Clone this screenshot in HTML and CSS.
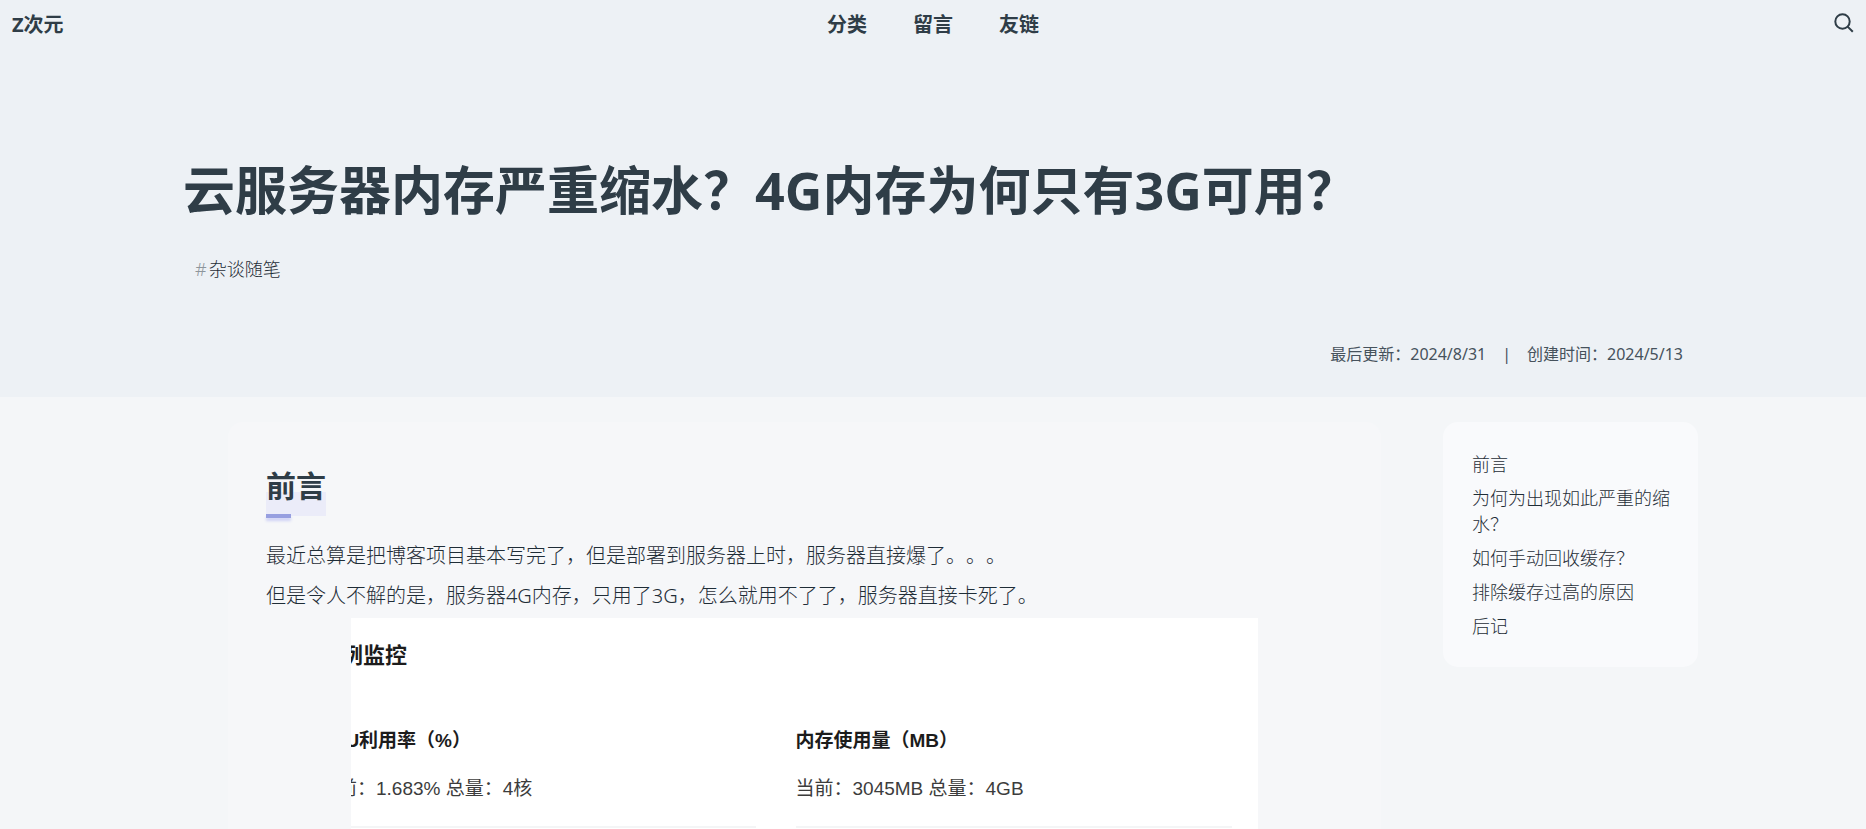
FILE: index.html
```html
<!DOCTYPE html>
<html lang="zh-CN">
<head>
  <meta charset="UTF-8">
  <meta name="viewport" content="width=device-width, initial-scale=1.0">
  <title>云服务器内存严重缩水？4G内存为何只有3G可用？</title>
  <link rel="stylesheet" href="styles.css">
</head>
<body>
  <header class="hero">
    <nav class="navbar">
      <a class="logo" href="#">Z次元</a>
      <div class="nav-links">
        <a href="#">分类</a>
        <a href="#">留言</a>
        <a href="#">友链</a>
      </div>
      <button class="search-btn" type="button" aria-label="搜索">
        <svg viewBox="0 0 20 20" width="20" height="20" fill="none" stroke="currentColor" stroke-width="2">
          <circle cx="8.5" cy="8.5" r="7.2"/>
          <path d="M13.6 13.6L18.8 18.8"/>
        </svg>
      </button>
    </nav>

    <div class="hero-inner">
      <h1>云服务器内存严重缩水？4G内存为何只有3G可用？</h1>
      <div class="tags">
        <a href="#"><span class="hash">#</span>杂谈随笔</a>
      </div>
      <div class="meta">
        <span>最后更新：2024/8/31</span>
        <span>|</span>
        <span>创建时间：2024/5/13</span>
      </div>
    </div>
  </header>

  <main class="content">
    <article class="post">
      <h2 id="preface">前言</h2>
      <p>最近总算是把博客项目基本写完了，但是部署到服务器上时，服务器直接爆了。。。</p>
      <p>但是令人不解的是，服务器4G内存，只用了3G，怎么就用不了了，服务器直接卡死了。</p>

      <!-- Server monitor panel, cut off at its left edge -->
      <figure class="monitor">
        <div class="monitor-inner">
          <h3>实例监控</h3>
          <div class="charts">
            <section>
              <h4>CPU利用率（%）</h4>
              <div class="usage">当前：1.683% 总量：4核</div>
            </section>
            <section>
              <h4>内存使用量（MB）</h4>
              <div class="usage">当前：3045MB 总量：4GB</div>
            </section>
          </div>
        </div>
      </figure>
    </article>

    <aside class="toc">
      <a href="#preface">前言</a>
      <a href="#">为何为出现如此严重的缩水？</a>
      <a href="#">如何手动回收缓存？</a>
      <a href="#">排除缓存过高的原因</a>
      <a href="#">后记</a>
    </aside>
  </main>
</body>
</html>
```
FILE: styles.css
```css
* {
  box-sizing: border-box;
}

body {
  margin: 0;
  background-color: #f4f6f8;
  color: #1f2d37;
  font-family: "Noto Sans", "Noto Sans CJK SC", sans-serif;
  font-size: 20px;
  font-weight: 300;
  text-spacing-trim: space-all;
  overflow-x: hidden;
}

a {
  color: inherit;
  text-decoration: none;
}

h1, h2, h3, h4, p, figure {
  margin: 0;
}

.hero {
  background-color: #edf1f5;
}

.navbar {
  display: grid;
  grid-template-columns: 1fr auto 1fr;
  align-items: center;
  height: 46px;
  padding: 0 12px;
  color: #2f3d47;
  font-weight: 700;
}

.nav-links {
  display: flex;
  gap: 46px;
}

.search-btn {
  justify-self: end;
  display: flex;
  padding: 0;
  border: none;
  background: none;
  color: inherit;
  cursor: pointer;
}

.hero-inner {
  max-width: 1500px;
  margin: 0 auto;
  padding: 105px 0 29px;
}

h1 {
  color: #2f3d47;
  font-size: 52px;
  font-weight: 700;
  line-height: 78px;
}

.tags {
  padding: 27px 12px 0;
  font-size: 18px;
  line-height: 26px;
}

.hash {
  margin-right: 2px;
  color: #8d959b;
}

.meta {
  display: flex;
  justify-content: flex-end;
  gap: 16px;
  padding-top: 59px;
  color: #46525c;
  font-size: 16px;
  font-weight: 400;
  line-height: 27px;
}

.content {
  display: grid;
  grid-template-columns: 1fr 255px;
  align-items: start;
  gap: 62px;
  padding: 25px 9% 0;
}

.post {
  margin-left: 60px;
  padding: 34px 38px 0;
  border-radius: 15px 15px 0 0;
  background-color: #f6f7f9;
}

.post h2 {
  position: relative;
  width: fit-content;
  margin-bottom: 20px;
  background: linear-gradient(to top, #ebecf9 40%, transparent 40%);
  color: #2f3d47;
  font-size: 30px;
  font-weight: 700;
  line-height: 60px;
}

/* Short glowing bar under the heading */
.post h2::after {
  content: "";
  position: absolute;
  left: 0;
  bottom: -2px;
  width: 25px;
  height: 4px;
  background-color: #979fe0;
  box-shadow: 0 3px 3px #cfd2f6;
}

.post p {
  line-height: 40px;
}

.monitor {
  max-width: 907px;
  margin: 2px auto 0;
  overflow: hidden;
  background-color: #fff;
  color: #1c1c1c;
  font-family: "Liberation Sans", "Noto Sans CJK SC", sans-serif;
  font-size: 19px;
}

.monitor-inner {
  margin-left: -32px;
  padding: 21px 26px 1px 0;
}

.monitor h3 {
  font-size: 22px;
  line-height: 34px;
}

.charts {
  display: grid;
  grid-template-columns: 1fr 1fr;
  gap: 40px;
  padding-top: 54px;
}

.charts section {
  border-bottom: 2px solid #f4f5f6;
}

.charts h4 {
  font-size: 19px;
  line-height: 28px;
}

.usage {
  padding: 20px 0 23px;
  color: #3c3c3c;
  font-weight: 400;
  line-height: 28px;
}

.toc {
  display: flex;
  flex-direction: column;
  gap: 8px;
  padding: 29px 24px 28px 29px;
  border-radius: 15px;
  background-color: #f9fafc;
  font-size: 18px;
  line-height: 26px;
}
```
